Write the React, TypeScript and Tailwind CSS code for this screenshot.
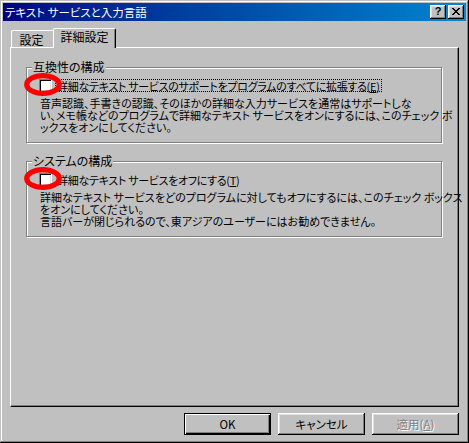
import React from "react";

function Ellipse() {
  return (
    <svg
      className="absolute left-[-15px] top-[-6px] w-[38px] h-[23px] pointer-events-none"
      viewBox="0 0 38 23"
    >
      <ellipse cx="19" cy="11.5" rx="16.3" ry="8.8" fill="none" stroke="#ff0000" strokeWidth="5.2" />
    </svg>
  );
}

function CheckBox() {
  return (
    <div className="w-[13px] h-[13px] shrink-0 bg-white border border-t-[#808080] border-l-[#808080] border-b-white border-r-white shadow-[inset_1px_1px_0_#000,inset_-1px_-1px_0_#dfdfdf]" />
  );
}

function Group({
  title,
  label,
  focus,
  lines,
  className,
}: {
  title: string;
  label: React.ReactNode;
  focus?: boolean;
  lines: string[];
  className?: string;
}) {
  return (
    <div
      className={
        "h-[76px] border border-[#808080] shadow-[1px_1px_0_#fff,inset_1px_1px_0_#fff] flex flex-col " +
        (className ?? "")
      }
    >
      <div className="-mt-[7px] ml-[5px] px-[1px] bg-[#c0c0c0] w-fit h-[12px] leading-[12px] whitespace-nowrap text-[12px]">
        {title}
      </div>
      <div className="mt-[6px] ml-[12px] flex items-center h-[13px] relative">
        <CheckBox />
        <div
          className={
            "ml-[3px] h-[13px] px-[1px] flex items-center leading-[12px] whitespace-nowrap tracking-[-0.3px] border " +
            (focus ? "border-dotted border-black" : "border-transparent")
          }
        >
          {label}
        </div>
        <Ellipse />
      </div>
      <div className="mt-[5px] ml-[13px] leading-[12px]">
        {lines.map((l, i) => (
          <div key={i} className="whitespace-nowrap h-[12px] leading-[12px]">
            {l}
          </div>
        ))}
      </div>
    </div>
  );
}

function Btn({
  children,
  def,
  disabled,
}: {
  children: React.ReactNode;
  def?: boolean;
  disabled?: boolean;
}) {
  return (
    <div
      className={
        "w-[87px] h-[22px] flex items-center justify-center leading-[12px] " +
        (def
          ? "border border-black shadow-[inset_1px_1px_0_#fff,inset_-1px_-1px_0_#000,inset_-2px_-2px_0_#808080]"
          : "shadow-[inset_-1px_-1px_0_#000,inset_1px_1px_0_#fff,inset_-2px_-2px_0_#808080,inset_2px_2px_0_#dfdfdf]") +
        (disabled ? " text-[#808080] [text-shadow:1px_1px_0_#fff]" : " text-black")
      }
    >
      {children}
    </div>
  );
}

export default function App() {
  return (
    <div className="w-[469px] h-[443px] bg-[#c0c0c0] flex flex-col pt-[3px] pl-[3px] pr-[3px] pb-[2px] shadow-[inset_-1px_-1px_0_#000,inset_1px_1px_0_#c0c0c0,inset_-2px_-2px_0_#808080,inset_2px_2px_0_#fff] font-['Noto_Sans_CJK_JP',sans-serif] [font-feature-settings:'palt'] text-[11px] text-black overflow-hidden">
      {/* Title bar */}
      <div className="h-[18px] shrink-0 flex items-center bg-linear-to-r from-[#000080] to-[#1084d0] pl-[2px] pr-[2px]">
        <div className="text-white leading-[18px] whitespace-nowrap flex-1 text-[11.5px]">テキスト サービスと入力言語</div>
        <div className="flex gap-[2px]">
          <div className="w-[16px] h-[14px] bg-[#c0c0c0] shadow-[inset_-1px_-1px_0_#000,inset_1px_1px_0_#fff,inset_-2px_-2px_0_#808080,inset_2px_2px_0_#dfdfdf] flex items-center justify-center font-['Liberation_Sans',sans-serif] font-bold text-[11px] leading-[11px] pb-[1px]">
            ?
          </div>
          <div className="w-[16px] h-[14px] bg-[#c0c0c0] shadow-[inset_-1px_-1px_0_#000,inset_1px_1px_0_#fff,inset_-2px_-2px_0_#808080,inset_2px_2px_0_#dfdfdf] flex items-center justify-center pb-[1px]">
            <svg width="8" height="7" viewBox="0 0 8 7" shapeRendering="crispEdges">
              <path
                d="M0 0h2v1H0zM6 0h2v1H6zM1 1h2v1H1zM5 1h2v1H5zM2 2h4v1H2zM3 3h2v1H3zM2 4h4v1H2zM1 5h2v1H1zM5 5h2v1H5zM0 6h2v1H0zM6 6h2v1H6z"
                fill="#000"
              />
            </svg>
          </div>
        </div>
      </div>

      <div className="flex-1 flex flex-col px-[7px] pt-[7px]">
        {/* Tabs */}
        <div className="flex items-end h-[19px] relative z-10 shrink-0 text-[12px]">
          <div className="ml-[1px] w-[42px] h-[17px] border-t border-l border-white rounded-tl-[2px] flex items-center justify-center pr-[2px] pt-[2px] leading-[12px]">
            設定
          </div>
          <div className="w-[63px] h-[20px] -mb-[1px] bg-[#c0c0c0] border-t border-l border-r border-t-white border-l-white border-r-black rounded-t-[2px] shadow-[inset_-1px_0_0_#808080] flex items-start justify-center pt-[2px] leading-[12px]">
            詳細設定
          </div>
        </div>

        {/* Panel */}
        <div className="h-[360px] shrink-0 border border-t-white border-l-white border-r-black border-b-black shadow-[inset_-1px_-1px_0_#808080] pl-[15px] pr-[16px] pt-[19px] flex flex-col">
          <Group
            title="互換性の構成"
            focus
            label={
              <span>
                詳細なテキスト サービスのサポートをプログラムのすべてに拡張する(<span className="underline">E</span>)
              </span>
            }
            lines={[
              "音声認識、手書きの認識、そのほかの詳細な入力サービスを通常はサポートしな",
              "い、メモ帳などのプログラムで詳細なテキスト サービスをオンにするには、このチェック ボ",
              "ックスをオンにしてください。",
            ]}
          />
          <Group
            className="mt-[18px]"
            title="システムの構成"
            label={
              <span>
                詳細なテキスト サービスをオフにする(<span className="underline">T</span>)
              </span>
            }
            lines={[
              "詳細なテキスト サービスをどのプログラムに対してもオフにするには、このチェック ボックス",
              "をオンにしてください。",
              "言語バーが閉じられるので、東アジアのユーザーにはお勧めできません。",
            ]}
          />
        </div>

        {/* Buttons */}
        <div className="mt-[6px] flex justify-end gap-[7px] shrink-0 text-[11.5px]">
          <Btn def>OK</Btn>
          <Btn>キャンセル</Btn>
          <Btn disabled>
            <span>
              適用(<span className="underline">A</span>)
            </span>
          </Btn>
        </div>
      </div>
    </div>
  );
}
